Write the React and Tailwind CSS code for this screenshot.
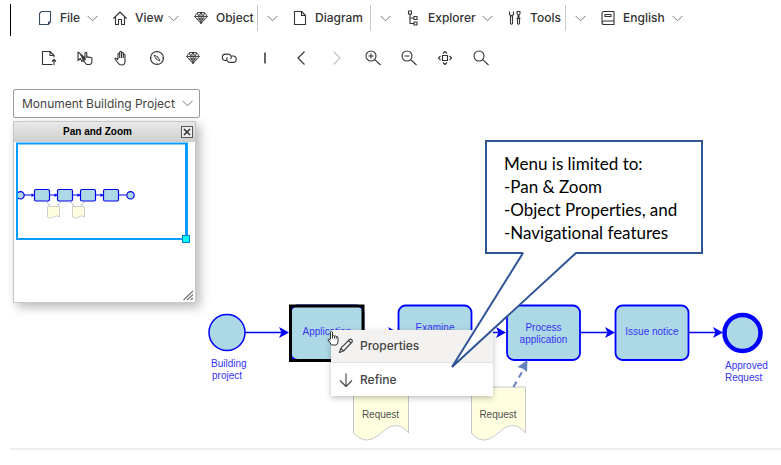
import React from "react";

const iconPaths = {
  page: <path d="M4.500 1.500H13.500V12L11.500 14.500H2.500V3.500zM13.500 12h-2v2.500" />,
  home: <path d="M1.500 8.500L8 2l6.500 6.500M3.500 7v7.500h3V9.500h3v5h3V7" />,
  gem: <path d="M4.500 2.500h7l2.800 4L8 13.500 1.700 6.500zM1.700 6.500h12.600M4.500 2.500l1 4L8 13.500l2.500-7 1-4M5.500 6.500L8 2.500l2.500 4M8 2.500v11M4 9h8" strokeWidth=".9" />,
  document: <path d="M2.500 1.500h7l4 4v9h-11zM9.500 1.500v4h4" />,
  tree: <path d="M3.500 1h3v3h-3zM9 6.500h3v3H9zM9 12h3v3H9zM5 4v9.500h4M5 8h4" />,
  tools: <path d="M2.500 1.500v3l2 1.500 2-1.500v-3M3.500 6v7.500q1 1.500 2 0V6M10 1.500h3v2l-1 1.500v3.500h-1V5l-1-1.500zM9.500 8.500h4M10.500 8.500v5q1 1.500 2 0v-5" />,
  book: <path d="M4 1.500h10v13H4q-2 0-2-2v-9q0-2 2-2zM2 12.500q0-1.500 2-1.500h10M5 4.500h6v2H5z" />,
  upload: <path d="M11.500 14.500H1.500v-13h7.500l4 4V7.500M9 1.500v4h4M13 15V9.500M11 11.500L13 9.500l2 2" />,
  pointers: <path d="M1 2v8.500l2.300-2 1.700 3 1.500-1-1.500-2.700H8zM3.500 5l5 5M8 9V3q.9-1.400 1.800 0v4.500q.8-1.200 1.700 0 .8-1 1.700.2 1-.6 1.700.4V11q0 3.500-2.500 3.500H9.700L6.300 10.700q0-1.300 1.700-.4" />,
  hand: <path d="M5 9V4q.8-1.500 1.700 0V2q.9-1.500 1.800 0v1q1-1.200 1.800 0v2q1-1.200 1.700 0v6.500q0 3.500-3.500 3.500-2 0-3.500-2L2 9q.5-1.800 3 .8M6.700 4v4M8.500 3v5M10.300 5v3" />,
  compass: (
    <>
      <circle cx="8" cy="8" r="6.500" />
      <path d="M5 5l4 2 2 4-4-2zM7.500 8.500l1-1M8 1.500v1.300M8 13.200v1.300M1.500 8h1.300M13.200 8h1.300" strokeWidth=".9" />
    </>
  ),
  link: <path d="M5.500 10.500H4.500a3.200 3.200 0 010-6.400H7a3.200 3.200 0 012.700 5M10.500 6H12a3 3 0 010 6.400H9a3.200 3.200 0 01-2.700-5" />,
  bar: <path d="M8 2.500v11" strokeWidth="1.500" />,
  back: <path d="M11.500 1.500L5 8l6.500 6.500" />,
  forward: <path d="M4.500 1.500L11 8l-6.500 6.500" />,
  zoomIn: <path d="M11 6a5 5 0 11-10 0 5 5 0 0110 0zM9.700 9.700L15.500 15M3.500 6h5M6 3.500v5" />,
  zoomOut: <path d="M11 6a5 5 0 11-10 0 5 5 0 0110 0zM9.700 9.700L15.500 15M3.500 6h5" />,
  fit: <path d="M5.500 5.500h5v5h-5zM6 3.500l2-2 2 2M6 12.500l2 2 2-2M3.500 6l-2 2 2 2M12.500 6l2 2-2 2" />,
  search: <path d="M11 6a5 5 0 11-10 0 5 5 0 0110 0zM9.700 9.700L15.500 15" />,
  pencil: <path d="M1.500 14.500l1.200-4.200L11.500 1.500q1.300-.8 2.300.3t.3 2.200L5.500 13zM2.700 10.300L5.500 13M10.500 2.500l3 3" />,
  down: <path d="M8 1.500v13M2 8.500l6 6 6-6" />,
};

function Icon({ name, className = "size-4" }) {
  return (
    <svg viewBox="0 0 16 16" className={`shrink-0 ${className}`} fill="none" stroke="currentColor" strokeWidth="1.100" strokeLinejoin="round" aria-hidden="true">
      {iconPaths[name]}
    </svg>
  );
}

function Chevron() {
  return (
    <svg viewBox="0 0 11 7" className="h-[7px] w-[11px] shrink-0" fill="none" stroke="#777" aria-hidden="true">
      <path d="M.5 .8l5 5 5-5" />
    </svg>
  );
}

const menus = [
  { label: "File", icon: "page", color: "text-[#384b66]" },
  { label: "View", icon: "home", color: "text-[#333]" },
  { label: "Object", icon: "gem", color: "text-[#333]", split: true },
  { label: "Diagram", icon: "document", color: "text-[#333]", split: true },
  { label: "Explorer", icon: "tree", color: "text-[#333]" },
  { label: "Tools", icon: "tools", color: "text-[#333]", split: true },
  { label: "English", icon: "book", color: "text-[#333]" },
];

const tools = [
  ["upload", "New version"],
  ["pointers", "Select"],
  ["hand", "Pan"],
  ["compass", "Navigate"],
  ["gem", "Object"],
  ["link", "Link"],
  ["bar", "Separator"],
  ["back", "Back"],
  ["forward", "Forward"],
  ["zoomIn", "Zoom in"],
  ["zoomOut", "Zoom out"],
  ["fit", "Fit"],
  ["search", "Search"],
];

function MenuBar() {
  return (
    <nav className="ml-[10px] grid h-8 grid-cols-[75px_81px_99px_113px_102px_93px_97px] border-l border-black pl-[26px]">
      {menus.map((m) => (
        <button key={m.label} type="button" className="flex items-center pr-[14px] pb-1 text-[12px] leading-4 font-medium text-[#333]">
          <Icon name={m.icon} className={`mr-[7px] size-4 ${m.color}`} />
          <span className="flex-1 text-left">{m.label}</span>
          {m.split && <span className="mr-[9px] h-[26px] w-px bg-[#c8c8c8]" />}
          <Chevron />
        </button>
      ))}
    </nav>
  );
}

function ToolBar() {
  return (
    <div className="mt-2 flex pl-[31px]">
      {tools.map(([name, label]) => (
        <button key={name} type="button" aria-label={label} disabled={name === "forward"} className="flex h-7 w-9 items-center justify-center text-[#333] disabled:text-[#c4c4c4]">
          <Icon name={name} />
        </button>
      ))}
    </div>
  );
}

function MiniMap() {
  return (
    <svg viewBox="14 142 181 160" className="block h-[160px] w-[181px]" aria-hidden="true">
      <g stroke="#0000f0" fill="#add8e6" strokeWidth="1.200">
        <path d="M24 195h10M49 195h8M73 195h7M96 195h7M119 195h7" />
        <circle cx="20.500" cy="195.300" r="3.700" />
        {[34.5, 57.5, 80.5, 103.5].map((x) => (
          <g key={x}>
            <rect x={x} y="189.500" width="15" height="11.500" rx="1.500" />
            <path d={`M${x - 3} 193.500l3 1.700-3 1.700z`} fill="#00f" stroke="none" />
          </g>
        ))}
        <circle cx="130.500" cy="195.300" r="3.700" />
      </g>
      <g fill="#ffffe0" stroke="#c4c4bd" strokeWidth=".8">
        <path d="M47.500 206.500H59.500V217q-3-2.500-6 0t-6 0z" />
        <path d="M72.500 206.500H84.500V217q-3-2.500-6 0t-6 0z" />
      </g>
      <path d="M47 201.500l2.500 4M58 205.500l2.500-4M70.500 201.500l3 4M81.500 205.500l3-4" stroke="#8497b5" strokeDasharray="2 1" />
      <path d="M16 142.500H188V240H16zM18 144.500V238H185V144.500z" fill="#0a9bff" fillRule="evenodd" />
      <rect x="182.500" y="235.500" width="7" height="7" fill="#0ff" stroke="#07c" />
      <path d="M183.500 300l9.500-9M187 300l6-5.500M190.500 300l2.500-2" stroke="#777" strokeWidth="1.200" />
    </svg>
  );
}

function PanPanel() {
  return (
    <section className="mt-[3px] w-[183px] border border-[#c8c8c8] bg-white shadow-[4px_4px_10px_rgba(0,0,0,0.28)]">
      <header className="flex h-5 items-center bg-linear-to-b from-[#e9e9e9] to-[#cecece] pr-[2px]">
        <h2 className="flex-1 text-center font-['Liberation_Sans',Arial,sans-serif] text-[10px] leading-4 font-bold text-black">Pan and Zoom</h2>
        <button type="button" aria-label="Close" className="size-3 border border-[#555] bg-[#eee]">
          <svg viewBox="0 0 10 10" className="block size-[10px]" stroke="#333" strokeWidth="1.600">
            <path d="M2 2l6 6M8 2l-6 6" />
          </svg>
        </button>
      </header>
      <MiniMap />
    </section>
  );
}

const tasks = [
  { x: 290.5, y: 335, lines: ["Application"] },
  { x: 398.5, y: 331, lines: ["Examine"] },
  { x: 507, y: 331, lines: ["Process", "application"] },
  { x: 615.5, y: 335, lines: ["Issue notice"] },
];

function Diagram() {
  return (
    <svg viewBox="0 80 781 368" className="absolute top-0 left-0 h-[368px] w-[781px]" fontFamily="Liberation Sans, Arial, sans-serif" fontSize="10">
      <g stroke="#00f" strokeWidth="1.500" fill="#00f">
        {[[245, 289], [364, 398], [471, 506], [580, 615], [688, 723]].map(([a, b]) => (
          <g key={a}>
            <path d={`M${a} 332.500H${b - 6}`} />
            <path d={`M${b} 332.500l-10-5.500 2.500 5.500-2.500 5.500z`} stroke="none" />
          </g>
        ))}
      </g>
      <circle cx="227" cy="332.500" r="18" fill="#add8e6" stroke="#00f" strokeWidth="1.500" />
      <circle cx="742.500" cy="333" r="18" fill="#add8e6" stroke="#00f" strokeWidth="4.500" />
      {tasks.map(({ x, y, lines }) => (
        <g key={x}>
          <rect x={x} y="305.500" width="73" height="54.500" rx="7" fill="#add8e6" stroke="#00f" strokeWidth="1.800" />
          {lines.map((line, i) => (
            <text key={line} x={x + 36.5} y={y + i * 12} textAnchor="middle" fill="#3535f4">{line}</text>
          ))}
        </g>
      ))}
      <rect x="290.500" y="306" width="72.500" height="54.500" fill="none" stroke="#000" strokeWidth="3" />
      <path d="M353.500 387H408.500V433c-8-10-17-9-25-2s-18 15-30 2zM471.500 387H525.500V433c-8-10-17-9-25-2s-18 15-29 2z" fill="#ffffe0" stroke="#c4c6cc" />
      <g fill="#505050" textAnchor="middle">
        <text x="380.500" y="418">Request</text>
        <text x="498" y="418">Request</text>
      </g>
      <path d="M513.500 387l9-16" stroke="#6482bd" strokeWidth="2" strokeDasharray="6 5" />
      <path d="M527.500 360l-10 7 5 1.500 4.500 3.500z" fill="#6482bd" />
      <g fill="#3535f4">
        <text x="211" y="367">Building</text>
        <text x="212" y="379">project</text>
        <text x="725" y="369">Approved</text>
        <text x="725" y="381">Request</text>
      </g>
    </svg>
  );
}

function ContextMenu() {
  return (
    <div role="menu" className="absolute top-[250px] left-[331px] w-[162px] bg-white text-[12px] font-medium text-[#444] shadow-[0_2px_6px_rgba(0,0,0,0.25)]">
      <button type="button" role="menuitem" className="flex h-[33px] w-full items-center gap-[6px] border-b border-[#e2e2e2] bg-[#f3f2f1] pl-[7px]">
        <Icon name="pencil" />
        Properties
      </button>
      <button type="button" role="menuitem" className="flex h-[33px] w-full items-center gap-[6px] pl-[7px]">
        <Icon name="down" />
        Refine
      </button>
    </div>
  );
}

function HandCursor() {
  return (
    <svg viewBox="0 0 12 16" className="absolute top-[250px] left-[327px] h-4 w-3" aria-hidden="true">
      <path d="M3.500 9V2q1-1.600 2 0v4q1-1 2 .2 1-.8 1.800.4 1.200-.6 1.700.6V11q0 2-1.500 4H4.500L1 9.800Q1 8 3.500 10" fill="#fff" stroke="#333" />
      <path d="M5.500 6v2.500M7.500 6.200v2.300M9.300 6.600v2" stroke="#333" />
    </svg>
  );
}

function Callout() {
  return (
    <aside className="absolute top-[60px] left-[451px] h-[230px] w-[254px]">
      <svg viewBox="451 140 254 230" className="absolute inset-0 size-full" aria-hidden="true">
        <path d="M486 141H702V253H576L452 367 523 253H486z" fill="#fff" stroke="#2f5597" strokeWidth="2" strokeMiterlimit="2" />
      </svg>
      <p className="relative pt-[12px] pl-[53px] font-[Lato,sans-serif] text-[17px] leading-[23px] whitespace-nowrap text-black [font-variant-ligatures:none]">
        Menu is limited to:<br />
        -Pan &amp; Zoom<br />
        -Object Properties, and<br />
        -Navigational features
      </p>
    </aside>
  );
}

export default function App() {
  return (
    <div className="overflow-hidden bg-white pb-4 font-[Inter,sans-serif]">
      <header className="h-20 pt-1">
        <MenuBar />
        <ToolBar />
      </header>
      <main className="relative h-[368px]">
        <Diagram />
        <div className="relative w-fit pt-[9px] pl-[13px]">
          <div className="relative w-[187px]">
            <select aria-label="Project" className="block h-[29px] w-full appearance-none rounded-xs border border-[#999] bg-white pl-2 text-[12px] text-[#444]">
              <option>Monument Building Project</option>
            </select>
            <span className="pointer-events-none absolute inset-y-0 right-[7px] flex items-center">
              <Chevron />
            </span>
          </div>
          <PanPanel />
        </div>
        <ContextMenu />
        <HandCursor />
        <Callout />
      </main>
      <hr className="ml-[10px] border-t-2 border-[#eee]" />
    </div>
  );
}
